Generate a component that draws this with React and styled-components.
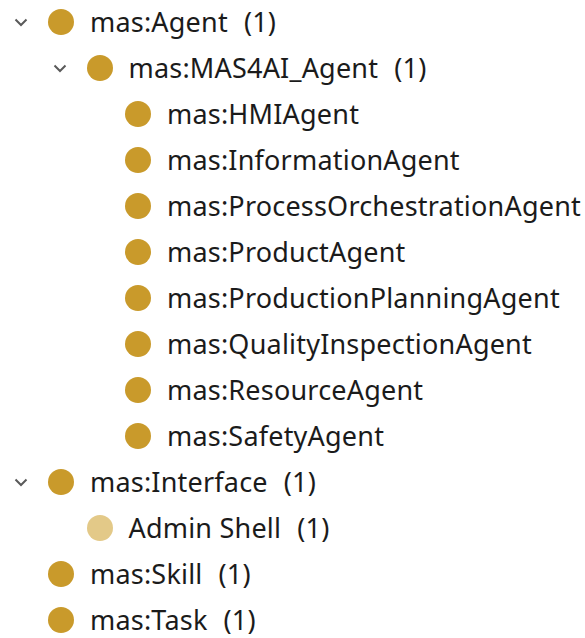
import styled, { createGlobalStyle } from "styled-components";

const Global = createGlobalStyle`
  html, body {
    margin: 0;
    padding: 0;
    background: #fff;
  }
  body {
    font-family: "Noto Sans", "Open Sans", sans-serif;
  }
`;

const Tree = styled.ul`
  list-style: none;
  margin: -1px 0 0;
  padding: 0;
  width: 585px;
`;

const Row = styled.li`
  display: flex;
  align-items: center;
  height: 46px;
  padding-left: ${(p) => 7 + p.depth * 38.5}px;
  white-space: nowrap;
`;

const Toggle = styled.span`
  width: 28px;
  height: 28px;
  display: flex;
  align-items: center;
  justify-content: center;
  flex: none;
  color: #5a5a5a;
`;

const Dot = styled.span`
  width: 26px;
  height: 26px;
  border-radius: 50%;
  flex: none;
  margin-left: 13px;
  background: ${(p) => (p.light ? "#e3c988" : "#c99a2b")};
`;

const Label = styled.span`
  margin-left: 16px;
  font-size: 27px;
  line-height: 26px;
  color: #1b1b1b;
  letter-spacing: 0.2px;
`;

const Count = styled.span`
  margin-left: 16px;
`;

const Chevron = () => (
  <svg width="14" height="9" viewBox="0 0 14 9">
    <path d="M1.5 1.5 L7 7 L12.5 1.5" fill="none" stroke="currentColor" strokeWidth="2" />
  </svg>
);

const nodes = [
  { depth: 0, open: true, label: "mas:Agent", count: 1 },
  { depth: 1, open: true, label: "mas:MAS4AI_Agent", count: 1 },
  { depth: 2, label: "mas:HMIAgent" },
  { depth: 2, label: "mas:InformationAgent" },
  { depth: 2, label: "mas:ProcessOrchestrationAgent" },
  { depth: 2, label: "mas:ProductAgent" },
  { depth: 2, label: "mas:ProductionPlanningAgent" },
  { depth: 2, label: "mas:QualityInspectionAgent" },
  { depth: 2, label: "mas:ResourceAgent" },
  { depth: 2, label: "mas:SafetyAgent" },
  { depth: 0, open: true, label: "mas:Interface", count: 1 },
  { depth: 1, light: true, label: "Admin Shell", count: 1 },
  { depth: 0, label: "mas:Skill", count: 1 },
  { depth: 0, label: "mas:Task", count: 1 },
];

export default function App() {
  return (
    <>
      <Global />
      <Tree>
        {nodes.map((n, i) => (
          <Row key={i} depth={n.depth}>
            <Toggle>{n.open && <Chevron />}</Toggle>
            <Dot light={n.light} />
            <Label>
              {n.label}
              {n.count != null && <Count>({n.count})</Count>}
            </Label>
          </Row>
        ))}
      </Tree>
    </>
  );
}
